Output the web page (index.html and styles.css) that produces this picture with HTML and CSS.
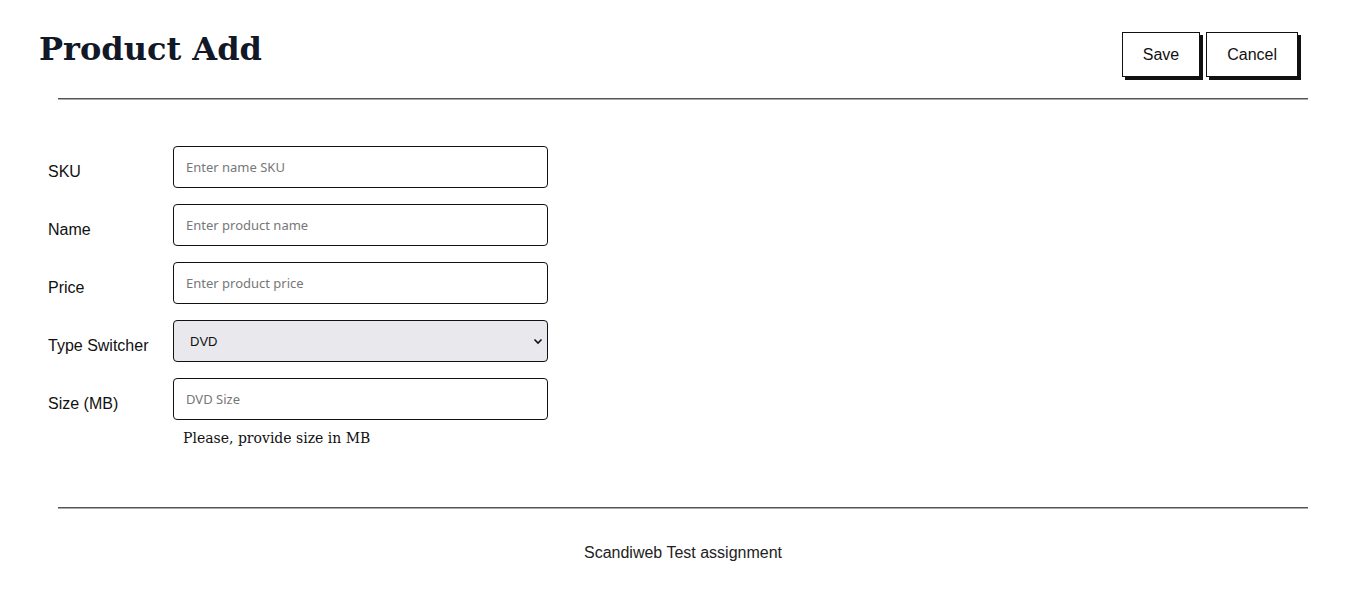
FILE: index.html
```html
<!DOCTYPE html>
<html lang="en">
<head>
<meta charset="utf-8">
<title>Product Add</title>
<link rel="stylesheet" href="styles.css">
</head>
<body>
<header class="header">
  <h1 class="title">Product Add</h1>
  <div class="actions">
    <button class="btn" type="button">Save</button>
    <button class="btn" type="button">Cancel</button>
  </div>
</header>
<hr class="rule">
<form class="form" id="product_form">
  <div class="row">
    <label class="label" for="sku">SKU</label>
    <input class="field" id="sku" type="text" placeholder="Enter name SKU">
  </div>
  <div class="row">
    <label class="label" for="name">Name</label>
    <input class="field" id="name" type="text" placeholder="Enter product name">
  </div>
  <div class="row">
    <label class="label" for="price">Price</label>
    <input class="field" id="price" type="text" placeholder="Enter product price">
  </div>
  <div class="row">
    <label class="label" for="productType">Type Switcher</label>
    <div class="select-wrap">
      <select class="field select" id="productType">
        <option>DVD</option>
        <option>Book</option>
        <option>Furniture</option>
      </select>
      <svg class="chevron" width="10" height="7" viewBox="0 0 10 7"><path d="M1.5 1.5 L5 5 L8.5 1.5" fill="none" stroke="#111" stroke-width="1.6"/></svg>
    </div>
  </div>
  <div class="row">
    <label class="label" for="size">Size (MB)</label>
    <div class="col">
      <input class="field" id="size" type="text" placeholder="DVD Size">
      <p class="hint">Please, provide size in MB</p>
    </div>
  </div>
</form>
<hr class="rule rule-bottom">
<footer class="footer">Scandiweb Test assignment</footer>
</body>
</html>
```

FILE: styles.css
```css
* { box-sizing: border-box; }
body {
  margin: 0;
  background: #fff;
  font-family: "Liberation Sans", Arial, sans-serif;
  color: #111;
}
.header {
  display: flex;
  justify-content: space-between;
  align-items: flex-start;
  padding: 32px 68px 0 39px;
}
.title {
  margin: 1px 0 0;
  font-family: "DejaVu Serif", serif;
  font-weight: bold;
  font-size: 32px;
  line-height: 32px;
  color: #111827;
}
.actions {
  display: flex;
  gap: 6px;
}
.btn {
  height: 45px;
  padding: 0 20px;
  background: #fff;
  border: 1px solid #111;
  box-shadow: 3px 3px 0 #111;
  font-family: "Liberation Sans", Arial, sans-serif;
  font-size: 16px;
  color: #111;
  cursor: pointer;
}
.rule {
  margin: 21px 58px 0;
  border: 0;
  border-top: 1px solid #555;
  border-bottom: 1px solid #aaa;
  height: 0;
}
.form {
  display: flex;
  flex-direction: column;
  gap: 16px;
  padding: 46px 0 0 48px;
}
.row {
  display: flex;
  align-items: flex-start;
}
.label {
  width: 125px;
  padding-top: 17px;
  font-size: 16px;
  line-height: 18px;
  color: #111;
}
.field {
  width: 375px;
  height: 42px;
  border: 1px solid #111;
  border-radius: 4px;
  padding: 0 12px;
  background: #fff;
  font-family: "Noto Sans", sans-serif;
  font-size: 13px;
  color: #111;
}
.field::placeholder { color: #777; }
.select-wrap { position: relative; }
.select {
  appearance: none;
  -webkit-appearance: none;
  background: #e9e9ed;
  padding: 0 16px;
  font-family: "Liberation Sans", Arial, sans-serif;
  font-size: 13px;
  font-weight: 500;
}
.chevron {
  position: absolute;
  right: 5px;
  top: 18px;
  pointer-events: none;
}
.col { display: flex; flex-direction: column; }
.hint {
  margin: 9px 0 0 10px;
  font-family: "DejaVu Serif", serif;
  font-size: 14px;
  line-height: 18px;
  color: #111;
}
.rule-bottom { margin-top: 60px; }
.footer {
  text-align: center;
  padding-top: 35px;
  font-size: 16px;
  line-height: 18px;
  color: #222;
}
```
